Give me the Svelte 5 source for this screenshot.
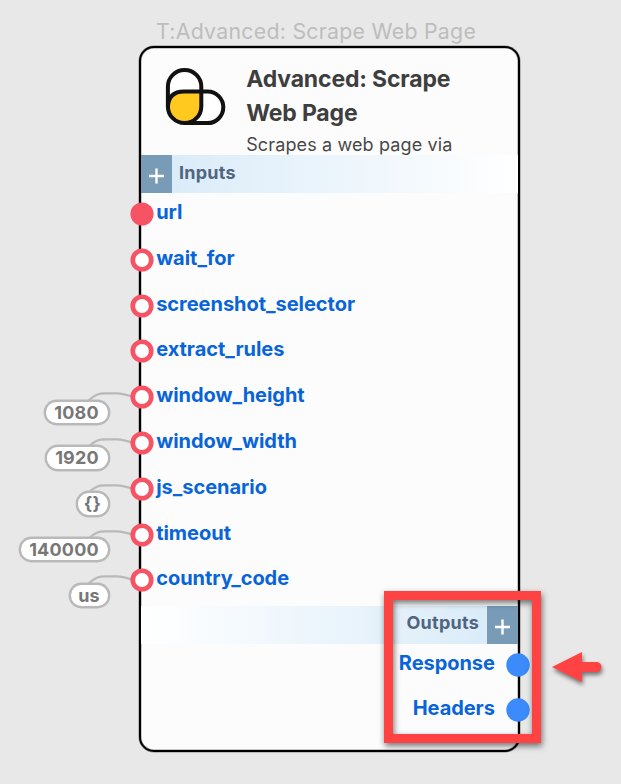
<script>
  const inputs = [
    { name: 'url', filled: true },
    { name: 'wait_for' },
    { name: 'screenshot_selector' },
    { name: 'extract_rules' },
    { name: 'window_height', value: '1080', width: 66 },
    { name: 'window_width', value: '1920', width: 65 },
    { name: 'js_scenario', value: '{}', width: 34 },
    { name: 'timeout', value: '140000', width: 91 },
    { name: 'country_code', value: 'us', width: 41 }
  ];
  const outputs = ['Response', 'Headers'];
</script>

<main class="canvas">
  <div class="node-title"><span>T:Advanced: Scrape Web Page</span></div>

  <section class="node">
    <header>
      <svg class="logo" width="62" height="60" viewBox="0 0 62 60">
        <rect x="2.9" y="2.9" width="33.4" height="53.2" rx="16.7" fill="#fff" />
        <rect x="2.9" y="24.5" width="55.4" height="31.6" rx="15.8" fill="#fff" />
        <path d="M19 24.5H36.3V40A16.7 16.1 0 0 1 19.6 56.1A16.7 16.1 0 0 1 2.9 40Q3.5 25 19 24.5Z" fill="#ffc91f" />
        <rect x="2.9" y="2.9" width="33.4" height="53.2" rx="16.7" fill="none" stroke="#111" stroke-width="4" />
        <path d="M2.9 40Q3.5 24.5 19 24.5H42.5A15.8 15.8 0 0 1 42.5 56.1H19.4" fill="none" stroke="#111" stroke-width="4" />
      </svg>
      <div class="heading">
        <h1>Advanced: Scrape<br />Web Page</h1>
        <p>Scrapes a web page via</p>
      </div>
    </header>

    <div class="bar in">
      <button aria-label="Add input">
        <svg width="16" height="16" viewBox="0 0 16 16"><path d="M7.5 .5V15.5M0 8H15" stroke="#fff" stroke-width="2.4" /></svg>
      </button>
      <span>Inputs</span>
    </div>

    <ul class="inputs">
      {#each inputs as input}
        <li>
          {#if input.value}
            <svg class="wire" width="46" height="12" viewBox="0 0 46 12">
              <path d="M1 10C8 3.6 12 2.4 18 2.4H30C36 2.4 40 3.8 46 6" fill="none" stroke="#b9b9b9" stroke-width="2.3" />
            </svg>
            <span class="pill" style:width="{input.width}px">{input.value}</span>
          {/if}
          <svg class="port" width="24" height="24" viewBox="0 0 24 24">
            <circle cx="12" cy="12" r="9.25" fill={input.filled ? '#f65365' : '#fff'} stroke="#f65365" stroke-width="4.7" />
          </svg>
          <span class="label">{input.name}</span>
        </li>
      {/each}
    </ul>

    <div class="bar out">
      <span>Outputs</span>
      <button aria-label="Add output">
        <svg width="16" height="16" viewBox="0 0 16 16"><path d="M8.5 .5V15.5M1 8H16" stroke="#fff" stroke-width="2.4" /></svg>
      </button>
    </div>

    <ul class="outputs">
      {#each outputs as name}
        <li>
          <span class="label">{name}</span>
          <svg class="port" width="24" height="24" viewBox="0 0 24 24"><circle cx="12" cy="12" r="11.7" fill="#3b8bfb" /></svg>
        </li>
      {/each}
    </ul>
  </section>

  <div class="highlight"></div>
  <svg class="arrow" width="60" height="44" viewBox="0 0 60 44">
    <path d="M4 19L34 4V14H48.5A5 5 0 0 1 48.5 24H34V34Z" fill="#ff4343" />
  </svg>
</main>

<style>
  .canvas {
    position: relative;
    box-sizing: border-box;
    width: 621px;
    height: 784px;
    padding: 18px 0 0 139px;
    background: #e8e8e8;
    overflow: hidden;
    font-family: Inter, 'Liberation Sans', sans-serif;
  }
  .node-title {
    height: 28px;
    padding-left: 17px;
    font-size: 21.3px;
    line-height: 27px;
    letter-spacing: 0.27px;
    color: #bdbdbd;
    white-space: nowrap;
  }
  .node {
    box-sizing: border-box;
    width: 380.5px;
    height: 706px;
    border: 2px solid #000;
    border-radius: 15px;
    background: #fcfcfc;
    box-shadow: 0 0 0 0.5px rgba(0, 0, 0, 0.4), inset 0 0 0 0.5px rgba(0, 0, 0, 0.4);
  }
  header {
    display: flex;
    height: 107px;
    overflow: hidden;
  }
  .logo {
    flex: none;
    margin: 19px 0 0 24.4px;
  }
  .heading {
    margin: 14px 0 0 18.8px;
    color: #3e3e3e;
    white-space: nowrap;
  }
  h1 {
    margin: 0;
    font-size: 23px;
    line-height: 34px;
    font-weight: 700;
    letter-spacing: -0.16px;
  }
  p {
    margin: 0;
    font-size: 18px;
    line-height: 30px;
    letter-spacing: 0.13px;
    color: #484848;
  }
  .bar {
    display: flex;
    height: 38px;
    font-size: 18px;
    font-weight: 700;
    line-height: 35px;
    letter-spacing: 0.25px;
    color: #4f6580;
  }
  .in {
    background: linear-gradient(90deg, #d7eaf8, #fff);
  }
  .out {
    justify-content: flex-end;
    line-height: 34px;
    background: linear-gradient(270deg, #d7eaf8, #fff);
  }
  .in span {
    margin-left: 7px;
  }
  .out span {
    margin-right: 7.5px;
  }
  button {
    display: flex;
    justify-content: center;
    width: 31px;
    height: 38px;
    padding: 13px 0 0;
    border: 0;
    background: #789cb8;
  }
  ul {
    margin: 0;
    padding: 0;
    list-style: none;
  }
  .inputs {
    height: 413px;
  }
  li {
    position: relative;
    display: flex;
    height: 45.8px;
  }
  .label {
    font-size: 20px;
    line-height: 38.4px;
    font-weight: 700;
    color: #0864d8;
  }
  .inputs .label {
    margin-left: 2.7px;
    letter-spacing: -0.03px;
  }
  .port {
    position: relative;
    flex: none;
    margin: 9px 0 0 -11.5px;
  }
  .outputs li {
    justify-content: flex-end;
    height: 45.4px;
  }
  .outputs .label {
    line-height: 38px;
    letter-spacing: -0.06px;
  }
  .outputs .port {
    margin: 8.5px -12px 0 10.7px;
  }
  .wire {
    position: absolute;
    left: -54px;
    top: 15px;
  }
  .pill {
    position: absolute;
    right: 408px;
    top: 23.5px;
    box-sizing: border-box;
    height: 25.4px;
    border: 2px solid #b9b9b9;
    border-radius: 13px;
    background: #fff;
    box-shadow: 0 0 0 0.4px #b9b9b9;
    font-size: 18px;
    line-height: 21px;
    letter-spacing: 0.2px;
    font-weight: 700;
    text-align: center;
    color: #777;
  }
  .highlight {
    position: absolute;
    left: 384px;
    top: 591px;
    box-sizing: border-box;
    width: 157px;
    height: 152px;
    border: 9px solid #ff4343;
    filter: drop-shadow(1px 3px 3px rgba(0, 0, 0, 0.55));
  }
  .arrow {
    position: absolute;
    left: 548px;
    top: 648px;
    filter: drop-shadow(1px 3px 2px rgba(0, 0, 0, 0.5));
  }
</style>
